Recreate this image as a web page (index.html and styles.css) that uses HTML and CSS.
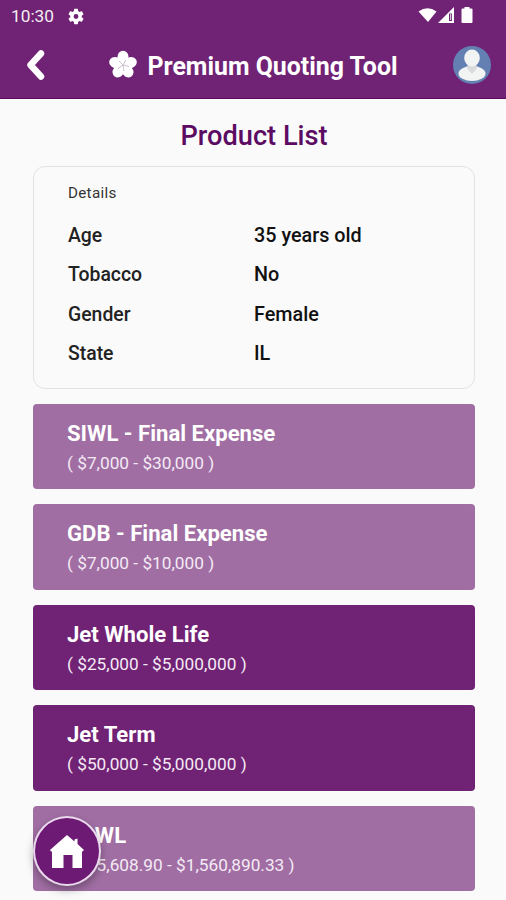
FILE: index.html
```html
<!DOCTYPE html>
<html lang="en">
<head>
    <meta charset="UTF-8" />
    <title>Premium Quoting Tool</title>
    <link rel="stylesheet" href="styles.css">
</head>
<body>
    <header class="header">
        <div class="status-bar">
            <span class="time">10:30</span>
            <svg class="gear" width="16" height="17" viewBox="2 2 20 20">
                <path fill="#fff" fill-rule="evenodd" d="M19.14 12.94c.04-.3.06-.61.06-.94s-.02-.64-.07-.94l2.03-1.58a.5.5 0 0 0 .12-.61l-1.92-3.32a.5.5 0 0 0-.59-.22l-2.39.96a7 7 0 0 0-1.62-.94l-.36-2.54a.5.5 0 0 0-.48-.41h-3.84a.5.5 0 0 0-.47.41l-.36 2.54a7 7 0 0 0-1.62.94l-2.39-.96a.5.5 0 0 0-.59.22L2.74 8.87a.5.5 0 0 0 .12.61l2.03 1.58a6 6 0 0 0 0 1.88l-2.03 1.58a.5.5 0 0 0-.12.61l1.92 3.32c.12.22.37.29.59.22l2.39-.96c.5.38 1.03.7 1.62.94l.36 2.54c.05.24.24.41.48.41h3.84c.24 0 .44-.17.47-.41l.36-2.54a7 7 0 0 0 1.62-.94l2.39.96c.22.08.47 0 .59-.22l1.92-3.32a.5.5 0 0 0-.12-.61zM12 15a3 3 0 1 1 0-6 3 3 0 0 1 0 6z"/>
            </svg>
            <svg class="signals" width="56" height="18" viewBox="0 0 56 18">
                <path fill="#fff" d="M.5 4.500Q9.500-2 18.500 4.500L10 15z"/>
                <path fill="#fff" d="M20 16L36 0v16z"/>
                <path fill="#702274" d="M31 6.500h3v7.500h-3z"/>
                <path fill="#d9c5da" d="M32 7h1.200v6H32z"/>
                <path fill="#fff" d="M44.500 1.500h2V0h5v1.500h2q1 0 1 1V15q0 1-1 1h-9q-1 0-1-1V2.500q0-1 1-1z"/>
            </svg>
        </div>
        <div class="toolbar">
            <svg class="back" width="20" height="32" viewBox="0 0 20 32">
                <path fill="none" stroke="#fff" stroke-width="6.500" stroke-linecap="round" stroke-linejoin="round" d="M15 4.500L4.500 16l10.500 11.500"/>
            </svg>
            <div class="brand">
                <svg width="30" height="30" viewBox="-15 -15 30 30">
                    <g fill="#fff">
                        <ellipse cy="-8.200" rx="5.500" ry="6"/>
                        <ellipse cy="-8.200" rx="5.500" ry="6" transform="rotate(72)"/>
                        <ellipse cy="-8.200" rx="5.500" ry="6" transform="rotate(144)"/>
                        <ellipse cy="-8.200" rx="5.500" ry="6" transform="rotate(216)"/>
                        <ellipse cy="-8.200" rx="5.500" ry="6" transform="rotate(288)"/>
                        <circle r="5.500"/>
                    </g>
                    <path fill="none" stroke="#c0b0c1" stroke-width=".8" d="M0 0l3-5M0 0l6 1.500M0 0l1 6M0 0l-5 3.500M0 0l-4-4"/>
                </svg>
                <h1 class="brand-name">Premium Quoting Tool</h1>
            </div>
            <svg class="avatar" width="38" height="38" viewBox="0 0 38 38">
                <circle cx="19" cy="19" r="19" fill="#6480b3"/>
                <ellipse cx="19" cy="27.500" rx="13.500" ry="7.500" fill="#f2f3f3"/>
                <path fill="#d9dbdc" d="M14.500 17h9v6L19 28l-4.500-5z"/>
                <ellipse cx="19" cy="12" rx="7.800" ry="8.500" fill="#f2f3f3"/>
            </svg>
        </div>
    </header>

    <main class="content">
        <h2 class="page-title">Product List</h2>

        <section class="details">
            <h3 class="details-title">Details</h3>
            <div class="row"><span>Age</span><span class="value">35 years old</span></div>
            <div class="row"><span>Tobacco</span><span class="value">No</span></div>
            <div class="row"><span>Gender</span><span class="value">Female</span></div>
            <div class="row"><span>State</span><span class="value">IL</span></div>
        </section>

        <div class="products">
            <div class="product light">
                <div class="name">SIWL - Final Expense</div>
                <div class="range">( $7,000 - $30,000 )</div>
            </div>
            <div class="product light">
                <div class="name">GDB - Final Expense</div>
                <div class="range">( $7,000 - $10,000 )</div>
            </div>
            <div class="product">
                <div class="name">Jet Whole Life</div>
                <div class="range">( $25,000 - $5,000,000 )</div>
            </div>
            <div class="product">
                <div class="name">Jet Term</div>
                <div class="range">( $50,000 - $5,000,000 )</div>
            </div>
            <div class="product light">
                <div class="name">SPWL</div>
                <div class="range">( $15,608.90 - $1,560,890.33 )</div>
            </div>
        </div>
    </main>

    <!-- Floating home button -->
    <div class="home-button">
        <svg width="34" height="33" viewBox="0 0 34 33">
            <path fill="#fff" d="M17 0l7.500 6.500V4.500l3-1v5.500l6.500 6-1.500 1.500H32V33h-9.500V20h-9v13H2V16.500H1L0 15z"/>
        </svg>
    </div>
</body>
</html>
```

FILE: styles.css
```css
/* General */
body {
    font-family: Roboto, sans-serif;
    background-color: #fafafa;
    margin: 0;
    height: 900px;
    overflow: hidden;
}

h1, h2, h3 {
    margin: 0;
}

svg {
    display: block;
    flex-shrink: 0;
}

/* Header */
.header {
    height: 99px;
    background-color: #702274;
    color: #fff;
    box-sizing: border-box;
    border-bottom: 1px solid #5b0b62;
}

.status-bar {
    display: flex;
    align-items: center;
    height: 32px;
    padding: 0 32px 0 11px;
}

.time {
    font-size: 17.3px;
    color: #f3ebf3;
}

.gear {
    margin-left: 14px;
}

.signals {
    margin-left: auto;
}

.toolbar {
    display: flex;
    align-items: center;
    justify-content: space-between;
    height: 66px;
    padding: 0 15px 0 26px;
}

.brand {
    display: flex;
    align-items: center;
    gap: 9px;
    margin-left: 7px;
}

.brand-name {
    padding-top: 3px;
    font-size: 24.9px;
    line-height: 30px;
    font-weight: 700;
    white-space: nowrap;
}

/* Content */
.content {
    padding: 0 31px 0 33px;
}

.page-title {
    padding-top: 21px;
    font-size: 27.2px;
    line-height: 32px;
    font-weight: 500;
    color: #5b0b62;
    text-align: center;
}

.details {
    box-sizing: border-box;
    height: 223px;
    margin-top: 14px;
    padding: 17px 34px;
    border: 1px solid #e2e2e2;
    border-radius: 12px;
}

.details-title {
    margin-bottom: 14px;
    font-size: 15.2px;
    line-height: 18px;
    font-weight: 400;
    letter-spacing: 0.3px;
    color: #333;
}

.row {
    display: grid;
    grid-template-columns: 186px 1fr;
    font-size: 19.4px;
    line-height: 39.3px;
    font-weight: 500;
    color: #222;
}

.value {
    font-size: 19.8px;
    color: #111;
}

/* Products */
.products {
    display: flex;
    flex-direction: column;
    gap: 15px;
    margin-top: 15px;
}

.product {
    box-sizing: border-box;
    height: 85.4px;
    flex-shrink: 0;
    padding: 14px 34px;
    border-radius: 4px;
    background-color: #702274;
    color: #fff;
}

.product.light {
    background-color: #a06ea3;
}

.name {
    font-size: 22.1px;
    line-height: 30px;
    font-weight: 700;
}

.range {
    font-size: 17.25px;
    line-height: 30px;
    color: #f4eaf5;
}

/* Home button */
.home-button {
    position: fixed;
    left: 33px;
    top: 816px;
    display: flex;
    align-items: center;
    justify-content: center;
    width: 68px;
    height: 70px;
    box-sizing: border-box;
    border: 2px solid #ead9ec;
    border-radius: 50%;
    background-color: #6d1a75;
    box-shadow: 0 4px 8px rgba(0,0,0,0.3);
}
```
